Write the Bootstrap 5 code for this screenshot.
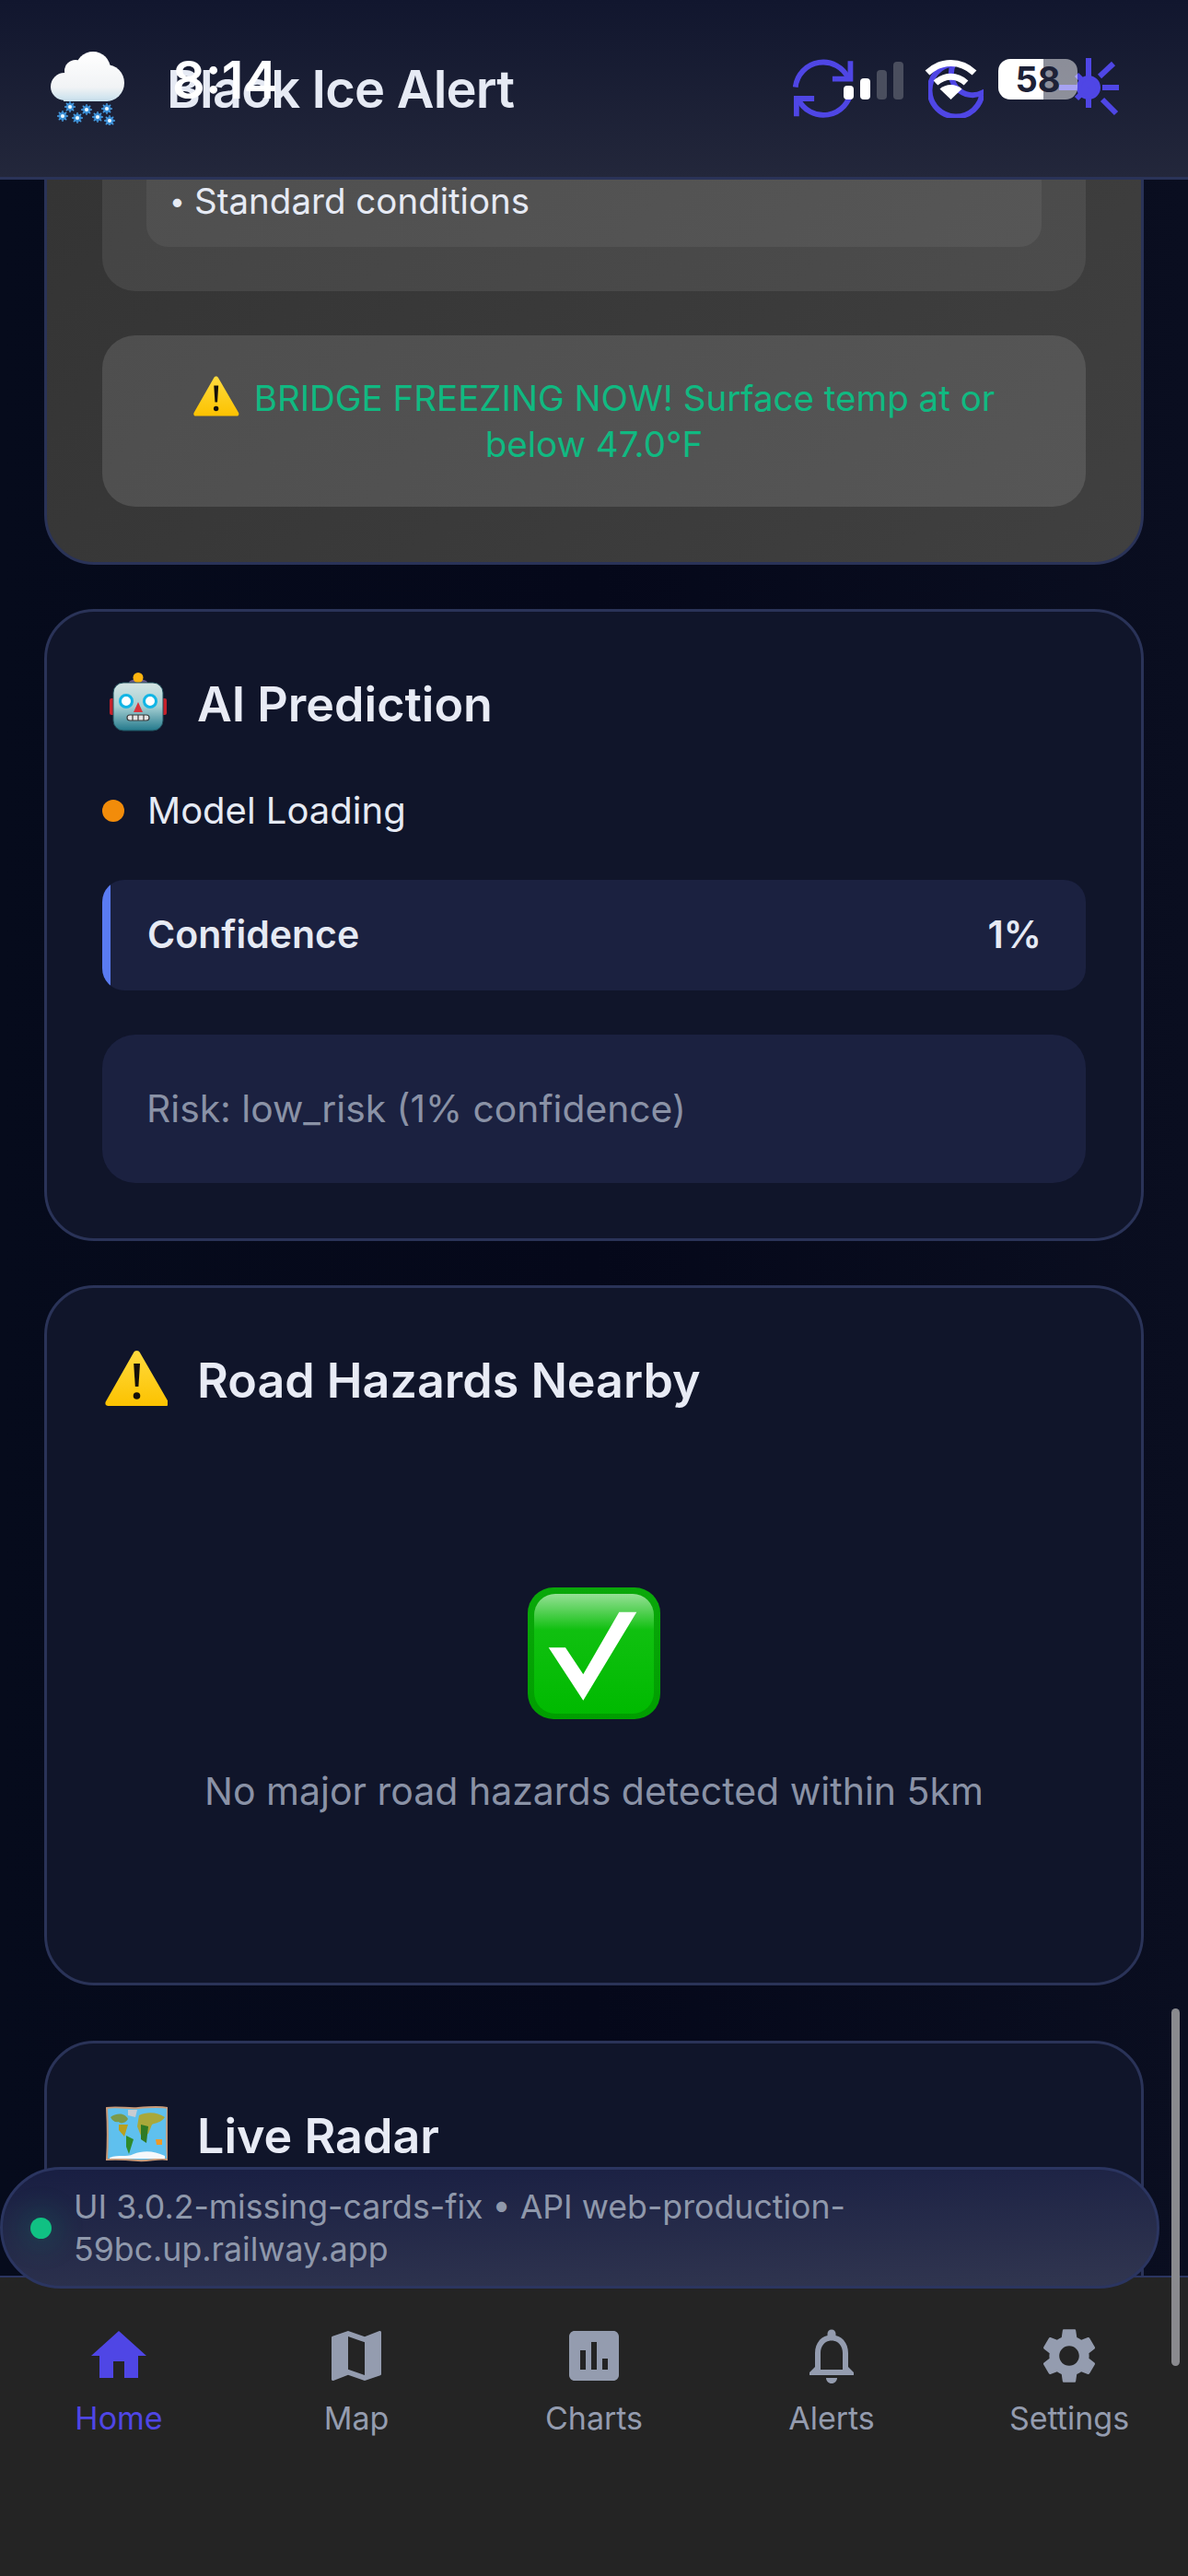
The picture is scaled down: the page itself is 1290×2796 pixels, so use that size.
<!DOCTYPE html>
<html lang="en">

<head>
  <meta charset="UTF-8">
  <meta name="viewport" content="width=device-width, initial-scale=1.0">
  <title>Black Ice Alert</title>
  <link href="https://cdn.jsdelivr.net/npm/bootstrap@5.3.3/dist/css/bootstrap.min.css" rel="stylesheet">
  <style>
    body {
      background: #060a1a;
      font-family: "Inter", "Liberation Sans", sans-serif;
    }

    .app-shell {
      width: 1290px;
      height: 2796px;
      overflow: hidden;
    }

    /* header */
    .app-header {
      height: 195px;
      flex: none;
      padding: 0 75px 0 55px;
      background: linear-gradient(180deg, #11162e 0%, #23273b 100%);
      border-bottom: 3px solid #2a3358;
      z-index: 3;
    }

    .app-title {
      font-size: 56px;
      font-weight: 600;
      color: #e6eaf4;
      margin: 4px 0 0 46px;
      letter-spacing: -0.8px;
    }

    .header-actions {
      gap: 78px;
    }

    .refresh-icon {
      margin-right: 3px;
    }

    .moon-icon {
      margin-top: 3px;
      margin-right: 3px;
    }

    .status-time {
      left: 187px;
      top: 57px;
      font-size: 56px;
      font-weight: 600;
      line-height: 60px;
      color: #fff;
    }

    .status-icons {
      left: 916px;
      top: 64px;
      gap: 23px;
    }

    .signal-bars {
      gap: 7px;
      height: 41px;
    }

    .signal-bars span {
      width: 11px;
      border-radius: 4px;
      background: #fff;
    }

    .signal-bars .dim {
      background: #4a4e5e;
    }

    .bar-1 { height: 15px; }
    .bar-2 { height: 23px; }
    .bar-3 { height: 32px; }
    .bar-4 { height: 41px; }

    .battery-pill {
      width: 86px;
      height: 44px;
      border-radius: 13px;
      background: linear-gradient(90deg, #fff 57%, rgba(255, 255, 255, 0.5) 57%);
      font-size: 38px;
      font-weight: 700;
      color: #1d2136;
      overflow: hidden;
    }

    /* scrolled content */
    .app-scroll {
      overflow: hidden;
      padding: 0 48px;
      background: linear-gradient(90deg, #060b1c 0%, #05081a 50%, #0a0e20 100%);
    }

    .panel {
      background: #10152a;
      border: 3px solid #2a3358;
      border-radius: 54px;
      margin-bottom: 48px;
      color: #e6eaf4;
      flex: none;
    }

    .panel-body {
      padding: 60px;
    }

    .panel-grey {
      margin-top: -132px;
      background: linear-gradient(135deg, #333333 0%, #404040 100%);
    }

    .box-outer {
      background: linear-gradient(135deg, #444444 0%, #4c4c4c 100%);
      border-radius: 36px;
      padding: 48px;
      margin-bottom: 48px;
    }

    .box-inner {
      background: linear-gradient(135deg, #4f4f4f 0%, #565656 100%);
      border-radius: 24px;
      padding: 20px 48px 26px 25px;
      font-size: 38.500px;
      line-height: 48px;
      color: #e6eaf4;
    }

    .box-bullet {
      width: 27px;
      flex: none;
      font-size: 30px;
    }

    .freeze-box {
      background: linear-gradient(135deg, #4e4e4e 0%, #565656 100%);
      border-radius: 36px;
      padding: 43px 48px 37px;
      height: 186px;
      font-size: 38.500px;
      line-height: 50px;
      color: #10b981;
      text-align: center;
    }

    .warn-inline {
      width: 50px;
      height: 44px;
      margin-right: 16px;
      vertical-align: -6px;
    }

    .panel-title {
      height: 82px;
      gap: 32px;
      font-size: 52px;
      font-weight: 600;
      margin: 0;
      color: #e8ebf5;
    }

    .title-icon {
      width: 71px;
      flex: none;
      margin-bottom: 6px;
    }

    .model-row {
      gap: 25px;
      height: 60px;
      margin: 44px 0 45px;
      font-size: 40px;
      color: #e6eaf4;
    }

    .dot-orange {
      width: 24px;
      height: 24px;
      border-radius: 50%;
      background: #f28c0a;
    }

    .confidence-row {
      height: 120px;
      border-radius: 24px;
      background: #1b2140;
      padding: 0 48px 0 49px;
      margin-bottom: 48px;
      font-size: 41px;
      font-weight: 600;
      overflow: hidden;
    }

    .confidence-fill {
      left: 0;
      top: 0;
      bottom: 0;
      background: #5a7bf2;
    }

    .risk-box {
      height: 161px;
      border-radius: 36px;
      background: #1b2140;
      padding: 0 48px;
      font-size: 40.800px;
      color: #8a92a6;
    }

    .hazard-empty {
      padding-top: 183px;
      height: 552px;
      font-size: 41px;
      color: #8a92a6;
    }

    .hazard-empty p {
      margin: 48px 0 0;
    }

    .panel-radar {
      margin-top: 12px;
      height: 400px;
    }

    /* footer pill, lies over the scrolled content */
    .version-pill {
      left: 0;
      top: 2352px;
      width: 1259px;
      height: 132px;
      border: 3px solid #2b3560;
      border-radius: 66px;
      background: linear-gradient(178deg, #181e42 0%, #313650 100%);
      padding-left: 30px;
      gap: 24px;
      font-size: 35.700px;
      line-height: 46px;
      color: #8f98ab;
      z-index: 4;
    }

    .dot-green {
      width: 23px;
      height: 23px;
      border-radius: 50%;
      background: #10c183;
      box-shadow: 0 0 30px 10px rgba(16, 193, 131, 0.14);
      flex: none;
    }

    /* bottom tabs */
    .tab-strip {
      height: 326px;
      flex: none;
      padding-top: 49px;
      background: #242424;
      border-top: 2px solid #2b3560;
      z-index: 3;
    }

    .tab-item {
      width: 258px;
      font-size: 34px;
      line-height: 42px;
      color: #949caf;
      text-decoration: none;
    }

    .tab-item svg {
      width: 72px;
      height: 72px;
      fill: currentColor;
      margin-bottom: 11px;
    }

    .tab-active {
      color: #4f46e5;
    }

    .fake-scrollbar {
      left: 1272px;
      top: 2180px;
      width: 9px;
      height: 388px;
      border-radius: 5px;
      background: #8a8a8e;
      z-index: 5;
    }
  </style>
</head>

<body>
  <div class="app-shell d-flex flex-column position-relative">

    <header class="app-header d-flex align-items-center position-relative">
      <svg width="80" height="80" viewBox="0 0 80 80" class="flex-shrink-0">
        <defs>
          <linearGradient id="cloudGrad" gradientUnits="userSpaceOnUse" x1="0" y1="0" x2="0" y2="54">
            <stop offset="0" stop-color="#ffffff" />
            <stop offset="0.72" stop-color="#f1f3f5" />
            <stop offset="1" stop-color="#c6dfec" />
          </linearGradient>
          <g id="flake" stroke="#4a9fe2" stroke-width="1.300">
            <circle r="4.500" fill="#2a74bd" stroke="none" />
            <path d="M-6 0H6M0-6V6M-4.200-4.200L4.200 4.200M-4.200 4.200L4.200-4.200" />
            <circle r="2" fill="#eef8ff" stroke="none" />
          </g>
        </defs>
        <g fill="url(#cloudGrad)">
          <circle cx="15" cy="38" r="15" />
          <circle cx="27" cy="21" r="12" />
          <circle cx="46" cy="19" r="19" />
          <circle cx="60" cy="34" r="20" />
          <rect x="14" y="30" width="48" height="24" />
        </g>
        <use href="#flake" x="21" y="60" />
        <use href="#flake" x="39" y="63" />
        <use href="#flake" x="61" y="62" />
        <use href="#flake" x="13" y="70" />
        <use href="#flake" x="29" y="72" />
        <use href="#flake" x="51" y="71" />
        <use href="#flake" x="64" y="75" />
      </svg>
      <h1 class="app-title">Black Ice Alert</h1>
      <div class="header-actions d-flex align-items-center ms-auto">
        <svg class="refresh-icon" width="66" height="66" viewBox="0 0 24 24" fill="none" stroke="#4f46e5" stroke-width="2.100">
          <path d="M1 11.500A11 11 0 0 1 22 8.200" />
          <path d="M22.700 1.200V8.200H15.600" />
          <path d="M23 12.500A11 11 0 0 1 2 16" />
          <path d="M1.400 23V16H8.400" />
        </svg>
        <svg class="moon-icon" width="60" height="60" viewBox="3 3 18 18" fill="none" stroke="#4f46e5" stroke-width="1.800">
          <path d="M20.600 12.800A8.600 8.600 0 1 1 11.200 3.400a7 7 0 0 0 9.400 9.400z" />
        </svg>
        <svg width="66" height="66" viewBox="0 0 66 66" fill="none" stroke="#4f46e5" stroke-width="6">
          <path d="M33 0V54" />
          <path d="M45 20L60 6" />
          <path d="M48 45L63 60" />
          <path d="M48 32H66" />
          <path d="M1 32H24" />
          <path d="M20 44L28 36" />
          <path d="M20 18L28 26" />
          <circle cx="33" cy="32" r="10" />
          <circle cx="33" cy="32" r="5" fill="#4f46e5" />
        </svg>
      </div>
      <div class="status-time position-absolute">8:14</div>
      <div class="status-icons d-flex align-items-end position-absolute">
        <div class="signal-bars d-flex align-items-end">
          <span class="bar-1"></span><span class="bar-2"></span><span class="bar-3 dim"></span><span class="bar-4 dim"></span>
        </div>
        <svg width="57" height="43" viewBox="0 0 57 43" fill="none" stroke="#fff" stroke-width="7">
          <path d="M3 14C18 0 39 0 54 14" />
          <path d="M12 25C22 16 35 16 45 25" />
          <path d="M16.500 31.500C23 25.500 34 25.500 40.500 31.500L28.500 43z" fill="#fff" stroke="none" />
        </svg>
        <div class="battery-pill d-flex align-items-center justify-content-center">58</div>
      </div>
    </header>

    <main class="app-scroll flex-grow-1 d-flex flex-column">
      <section class="card panel panel-grey">
        <div class="panel-body">
          <div class="box-outer">
            <div class="box-inner d-flex"><span class="box-bullet">•</span><span>Standard conditions</span></div>
          </div>
          <div class="freeze-box">
            <svg class="warn-inline" viewBox="0 0 70 60">
              <use href="#warnIcon" />
            </svg>BRIDGE FREEZING NOW! Surface temp at or below 47.0°F
          </div>
        </div>
      </section>

      <section class="card panel">
        <div class="panel-body">
          <h2 class="panel-title d-flex align-items-center">
            <svg class="title-icon" height="64" viewBox="-1 0 71 64">
              <defs>
                <linearGradient id="robotHead" x1="0" y1="0" x2="0" y2="1">
                  <stop offset="0" stop-color="#d5e4e4" />
                  <stop offset="0.5" stop-color="#a5cfd2" />
                  <stop offset="1" stop-color="#23798c" />
                </linearGradient>
              </defs>
              <rect x="7" y="28" width="8" height="18" rx="2" fill="#c5202a" />
              <rect x="61" y="28" width="8" height="18" rx="2" fill="#c5202a" />
              <path d="M28 11C28 6 48 6 48 11C44 14 32 14 28 11z" fill="#6d5a8a" />
              <circle cx="38" cy="5.500" r="5.500" fill="#fdb40f" />
              <rect x="11" y="11" width="54" height="52" rx="11" fill="url(#robotHead)" stroke="#20505c" stroke-width="1" />
              <circle cx="25" cy="31" r="6.500" fill="#fff" stroke="#12b5e5" stroke-width="3" />
              <circle cx="51" cy="31" r="6.500" fill="#fff" stroke="#12b5e5" stroke-width="3" />
              <path d="M38 32L43 43H33z" fill="#d9343c" />
              <rect x="26" y="46" width="24" height="6" rx="3" fill="#e4e4e4" stroke="#3b3b3b" stroke-width="1.200" />
              <path d="M32 46V52M38 46V52M44 46V52" stroke="#3b3b3b" stroke-width="1.200" />
            </svg>
            AI Prediction
          </h2>
          <div class="model-row d-flex align-items-center">
            <span class="dot-orange"></span>
            <span>Model Loading</span>
          </div>
          <div class="confidence-row d-flex align-items-center justify-content-between position-relative">
            <span class="confidence-fill position-absolute" style="width: 9px;"></span>
            <span>Confidence</span>
            <span>1%</span>
          </div>
          <div class="risk-box d-flex align-items-center">Risk: low_risk (1% confidence)</div>
        </div>
      </section>

      <section class="card panel">
        <div class="panel-body">
          <h2 class="panel-title d-flex align-items-center">
            <svg class="title-icon" height="60" viewBox="-3 0 71 60">
              <defs>
                <linearGradient id="warnGrad" x1="0" y1="0" x2="0" y2="1">
                  <stop offset="0" stop-color="#ffdb3e" />
                  <stop offset="1" stop-color="#fcc200" />
                </linearGradient>
                <g id="warnIcon">
                  <path d="M34.500 0C36 0 37.200 .8 38 2.200L68.500 55C70 57.800 68.500 60 66 60H3.500C1 60 -.5 57.800 1 55L31 2.200C31.800 .8 33 0 34.500 0z" fill="url(#warnGrad)" />
                  <path d="M31.200 14H38L36.400 39H32.800z" fill="#14100a" />
                  <circle cx="34.500" cy="49" r="3.800" fill="#14100a" />
                </g>
              </defs>
              <use href="#warnIcon" />
            </svg>
            Road Hazards Nearby
          </h2>
          <div class="hazard-empty d-flex flex-column align-items-center">
            <svg width="144" height="143" viewBox="0 0 144 143">
              <defs>
                <linearGradient id="checkGrad" x1="0" y1="0" x2="0" y2="1">
                  <stop offset="0" stop-color="#0aa80a" />
                  <stop offset="1" stop-color="#009e00" />
                </linearGradient>
                <linearGradient id="checkShine" x1="0" y1="0" x2="0" y2="1">
                  <stop offset="0" stop-color="#96e096" />
                  <stop offset="0.3" stop-color="#10c010" />
                  <stop offset="1" stop-color="#00ba00" />
                </linearGradient>
              </defs>
              <rect width="144" height="143" rx="28" fill="url(#checkGrad)" />
              <rect x="7" y="7" width="130" height="130" rx="23" fill="url(#checkShine)" />
              <path d="M22.700 65.300H41L60.300 94.300L99.300 26.700H118.300L60.300 122.700z" fill="#fff" />
            </svg>
            <p>No major road hazards detected within 5km</p>
          </div>
        </div>
      </section>

      <section class="card panel panel-radar">
        <div class="panel-body">
          <h2 class="panel-title d-flex align-items-center">
            <svg class="title-icon" height="62" viewBox="-4 -1 71 62">
              <path d="M1 2C12 0 24 3 35 2C46 1 58 0 67 2C66 20 66 42 67 58C58 56 46 60 35 59C24 58 12 57 1 58C2 42 2 20 1 2z" fill="#5fc0ee" stroke="#c99a78" stroke-width="2" />
              <path d="M5 12C10 8 20 6 24 14C22 18 16 20 14 17C10 18 7 16 5 12z" fill="#7b9a4a" />
              <path d="M14 20L24 20L20 33L14 26z" fill="#b8a020" />
              <path d="M22 32L30 36L25 52L22 44z" fill="#2f8a2a" />
              <path d="M36 10C44 6 56 6 64 12C60 18 54 18 50 20L46 30L38 32L34 22z" fill="#a9a83a" />
              <path d="M38 20L46 22L44 40L38 36z" fill="#2f7a24" />
              <path d="M54 36L61 36L61 42L55 42z" fill="#ee9a28" />
              <path d="M24 4L34 4L32 12L24 10z" fill="#c9ccd2" />
              <path d="M4 56C14 52 22 56 30 52C40 48 52 48 64 54V57H4z" fill="#f4f8fb" />
            </svg>
            Live Radar
          </h2>
        </div>
      </section>
    </main>

    <nav class="tab-strip d-flex justify-content-start">
      <a class="tab-item tab-active d-flex flex-column align-items-center" href="#">
        <svg viewBox="0 0 24 24"><path d="M10 20v-6h4v6h5v-8h3L12 3 2 12h3v8z" /></svg>
        Home
      </a>
      <a class="tab-item d-flex flex-column align-items-center" href="#">
        <svg viewBox="0 0 24 24"><path d="M20.500 3l-.16.03L15 5.100 9 3 3.360 4.900c-.21.07-.36.25-.36.48V20.500c0 .28.22.5.5.5l.16-.03L9 18.900l6 2.100 5.640-1.900c.21-.07.36-.25.36-.48V3.500c0-.28-.22-.5-.5-.5zM15 19l-6-2.110V5l6 2.110V19z" /></svg>
        Map
      </a>
      <a class="tab-item d-flex flex-column align-items-center" href="#">
        <svg viewBox="0 0 24 24"><path d="M19 3H5c-1.100 0-2 .9-2 2v14c0 1.100.9 2 2 2h14c1.100 0 2-.9 2-2V5c0-1.100-.9-2-2-2zM9 17H7v-7h2v7zm4 0h-2V7h2v10zm4 0h-2v-4h2v4z" /></svg>
        Charts
      </a>
      <a class="tab-item d-flex flex-column align-items-center" href="#">
        <svg viewBox="0 0 24 24"><path d="M12 22c1.100 0 2-.9 2-2h-4c0 1.100.9 2 2 2zm6-6v-5c0-3.070-1.630-5.640-4.500-6.320V4c0-.83-.67-1.500-1.500-1.500s-1.500.67-1.500 1.500v.68C7.640 5.360 6 7.920 6 11v5l-2 2v1h16v-1l-2-2zm-2 1H8v-6c0-2.480 1.510-4.500 4-4.500s4 2.020 4 4.500v6z" /></svg>
        Alerts
      </a>
      <a class="tab-item d-flex flex-column align-items-center" href="#">
        <svg viewBox="0 0 24 24"><path d="M19.140 12.940c.04-.3.06-.61.06-.94 0-.32-.02-.64-.07-.94l2.030-1.580c.18-.14.23-.41.12-.61l-1.920-3.320c-.12-.22-.37-.29-.59-.22l-2.390.96c-.5-.38-1.030-.7-1.620-.94l-.36-2.540c-.04-.24-.24-.41-.48-.41h-3.840c-.24 0-.43.17-.47.41l-.36 2.540c-.59.24-1.130.57-1.620.94l-2.390-.96c-.22-.08-.47 0-.59.22L2.740 8.870c-.12.21-.08.47.12.61l2.030 1.580c-.05.3-.09.63-.09.94s.02.64.07.94l-2.030 1.580c-.18.14-.23.41-.12.61l1.920 3.320c.12.22.37.29.59.22l2.390-.96c.5.38 1.030.7 1.620.94l.36 2.540c.05.24.24.41.48.41h3.840c.24 0 .44-.17.47-.41l.36-2.540c.59-.24 1.130-.56 1.620-.94l2.390.96c.22.08.47 0 .59-.22l1.920-3.320c.12-.22.07-.47-.12-.61l-2.010-1.580zM12 15.600c-1.980 0-3.600-1.620-3.600-3.600s1.620-3.600 3.600-3.600 3.600 1.620 3.600 3.600-1.620 3.600-3.600 3.600z" /></svg>
        Settings
      </a>
    </nav>

    <div class="version-pill d-flex align-items-center position-absolute">
      <span class="dot-green"></span>
      <span>UI 3.0.2-missing-cards-fix • API web-production-<br>59bc.up.railway.app</span>
    </div>
    <div class="fake-scrollbar position-absolute"></div>
  </div>

  <script src="https://cdn.jsdelivr.net/npm/bootstrap@5.3.3/dist/js/bootstrap.bundle.min.js"></script>
</body>

</html>
